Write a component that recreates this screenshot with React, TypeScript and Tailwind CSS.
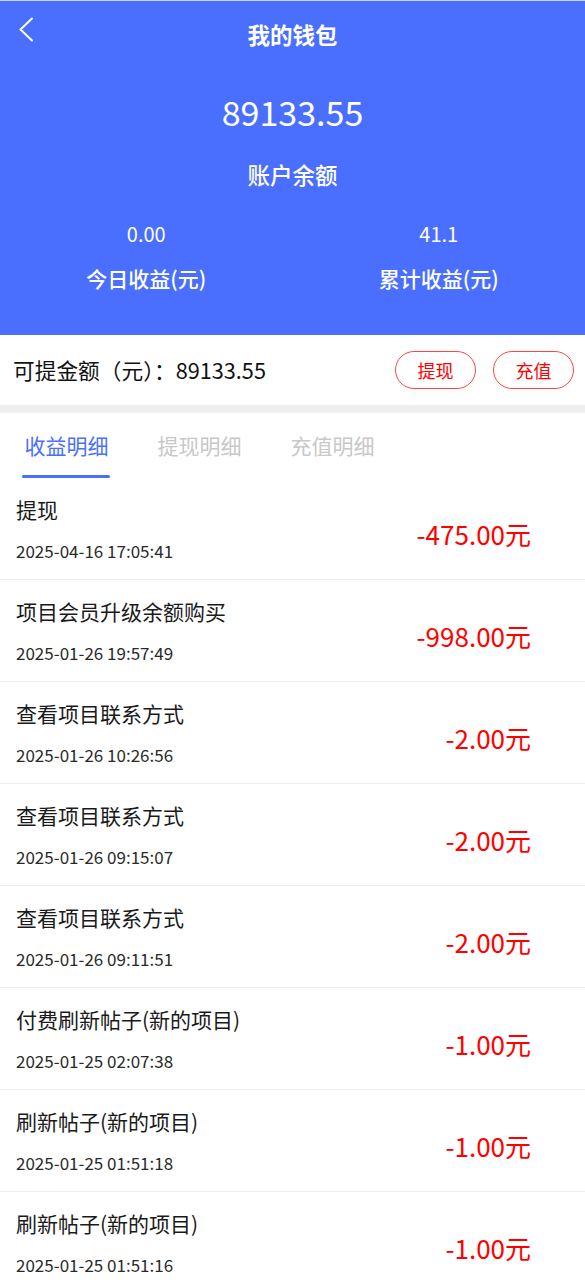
import React, { useState } from "react";

const FONT = { fontFamily: '"Noto Sans CJK SC", "Noto Sans", sans-serif' };

interface Record {
  title: string;
  time: string;
  amount: string;
}

const records: Record[] = [
  { title: "提现", time: "2025-04-16 17:05:41", amount: "-475.00元" },
  { title: "项目会员升级余额购买", time: "2025-01-26 19:57:49", amount: "-998.00元" },
  { title: "查看项目联系方式", time: "2025-01-26 10:26:56", amount: "-2.00元" },
  { title: "查看项目联系方式", time: "2025-01-26 09:15:07", amount: "-2.00元" },
  { title: "查看项目联系方式", time: "2025-01-26 09:11:51", amount: "-2.00元" },
  { title: "付费刷新帖子(新的项目)", time: "2025-01-25 02:07:38", amount: "-1.00元" },
  { title: "刷新帖子(新的项目)", time: "2025-01-25 01:51:18", amount: "-1.00元" },
  { title: "刷新帖子(新的项目)", time: "2025-01-25 01:51:16", amount: "-1.00元" },
];

const tabs = ["收益明细", "提现明细", "充值明细"];

export default function App() {
  const [tab, setTab] = useState(0);

  return (
    <div className="w-[585px] min-h-screen bg-white overflow-hidden" style={FONT}>
      {/* 顶部 */}
      <div className="bg-[#4a6ffe] text-white h-[335px] border-t border-[#c9d3ff]">
        <div className="relative h-[67px] flex items-center justify-center">
          <svg
            className="absolute left-[18px] top-[16px]"
            width="16"
            height="25"
            viewBox="0 0 16 25"
            fill="none"
            stroke="white"
            strokeWidth="2"
            strokeLinecap="round"
            strokeLinejoin="round"
          >
            <path d="M14 1.5 L2.5 12.5 L14 23.5" />
          </svg>
          <h1 className="text-[22.5px] font-bold leading-none">我的钱包</h1>
        </div>
        <div className="h-[87px] flex items-center justify-center text-[34px] leading-none">89133.55</div>
        <div className="h-[38px] flex items-center justify-center text-[22.5px] font-medium leading-none">账户余额</div>
        <div className="grid grid-cols-2 pt-[19px]">
          {[
            ["0.00", "今日收益(元)"],
            ["41.1", "累计收益(元)"],
          ].map(([v, l]) => (
            <div key={l} className="flex flex-col items-center">
              <div className="h-[44px] flex items-center text-[20px] leading-none">{v}</div>
              <div className="h-[44px] flex items-center text-[21px] font-medium leading-none">{l}</div>
            </div>
          ))}
        </div>
      </div>

      {/* 可提金额 */}
      <div className="h-[70px] flex items-center justify-between pl-[13px] pr-[11px]">
        <span className="text-[21.7px] text-[#111]">可提金额（元）：89133.55</span>
        <div className="flex gap-[17px]">
          <button className="w-[81px] h-[38px] rounded-full border border-[#f44] text-[#f00] text-[18px] leading-none">
            提现
          </button>
          <button className="w-[81px] h-[38px] rounded-full border border-[#f44] text-[#f00] text-[18px] leading-none">
            充值
          </button>
        </div>
      </div>
      <div className="h-[8px] bg-[#efefef]" />

      {/* 标签 */}
      <div className="flex h-[65px]">
        {tabs.map((t, i) => (
          <button
            key={t}
            onClick={() => setTab(i)}
            className="relative w-[133px] flex items-start justify-center pt-[18px]"
          >
            <span className={`text-[21px] leading-[28px] ${tab === i ? "text-[#4a6ffe]" : "text-[#c8c8c8]"}`}>{t}</span>
            {tab === i && <span className="absolute bottom-0 left-[22px] w-[88px] h-[3px] bg-[#4a6ffe] rounded-sm" />}
          </button>
        ))}
      </div>

      {/* 列表 */}
      <div>
        {records.map((r, i) => (
          <div key={i} className="h-[102px] flex justify-between border-b border-[#eee] pl-[16px] pr-[54px]">
            <div className="pt-[15px]">
              <div className="text-[21px] leading-[32px] text-[#1a1a1a]">{r.title}</div>
              <div className="mt-[12px] text-[17px] leading-[28px] text-[#2a2a2a]">{r.time}</div>
            </div>
            <div className="pt-[42px] text-[26px] leading-[28px] text-[#ff0000]">{r.amount}</div>
          </div>
        ))}
      </div>
    </div>
  );
}
